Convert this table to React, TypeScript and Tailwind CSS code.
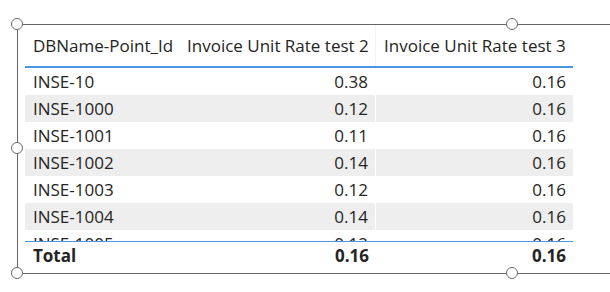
import React from 'react';

const rows = [
    { id: 'INSE-10', a: '0.38', b: '0.16' },
    { id: 'INSE-1000', a: '0.12', b: '0.16' },
    { id: 'INSE-1001', a: '0.11', b: '0.16' },
    { id: 'INSE-1002', a: '0.14', b: '0.16' },
    { id: 'INSE-1003', a: '0.12', b: '0.16' },
    { id: 'INSE-1004', a: '0.14', b: '0.16' },
    { id: 'INSE-1005', a: '0.12', b: '0.16' },
];

const Handle = ({ className }: { className: string }) => (
    <div className={`absolute w-[12px] h-[12px] rounded-full border border-[#6b6b6b] bg-white ${className}`} />
);

const App: React.FC = () => {
    return (
        <div className="relative w-[610px] h-[292px] overflow-hidden bg-white text-[#252423] font-['Open_Sans',sans-serif] text-[17px] leading-none">
            {/* visual frame */}
            <div className="ml-[17px] mt-[24px] w-[990px] h-[250px] border-t border-l border-b border-[#666666] pl-[7px]">
                <div className="w-[548px]">
                    {/* header */}
                    <div className="flex h-[43px] items-center border-b-2 border-[#4a94e4]">
                        <div className="w-[154px] pl-[8px] whitespace-nowrap">DBName-Point_Id</div>
                        <div className="w-[197px] pl-[8px] whitespace-nowrap border-r border-[#f3f3f3] h-full flex items-center">Invoice Unit Rate test 2</div>
                        <div className="w-[197px] pl-[8px] whitespace-nowrap">Invoice Unit Rate test 3</div>
                    </div>

                    {/* body */}
                    <div className="h-[173px] overflow-hidden">
                        {rows.map((r, i) => (
                            <div key={r.id} className={`flex h-[27px] items-center ${i % 2 === 1 ? 'bg-[#eeeeee]' : 'bg-white'}`}>
                                <div className="w-[154px] pl-[8px]">{r.id}</div>
                                <div className="w-[197px] pr-[7px] text-right h-full flex items-center justify-end border-r border-white">{r.a}</div>
                                <div className="w-[197px] pr-[7px] text-right">{r.b}</div>
                            </div>
                        ))}
                    </div>

                    {/* total */}
                    <div className="flex h-[28px] items-center border-t border-[#4a94e4] font-bold">
                        <div className="w-[154px] pl-[8px]">Total</div>
                        <div className="w-[197px] pr-[7px] text-right">0.16</div>
                        <div className="w-[197px] pr-[7px] text-right">0.16</div>
                    </div>
                </div>
            </div>

            {/* resize handles */}
            <Handle className="left-[11px] top-[18px]" />
            <Handle className="left-[506px] top-[18px]" />
            <Handle className="left-[11px] top-[142px]" />
            <Handle className="left-[11px] top-[267px]" />
            <Handle className="left-[506px] top-[267px]" />
        </div>
    );
};

export default App;
